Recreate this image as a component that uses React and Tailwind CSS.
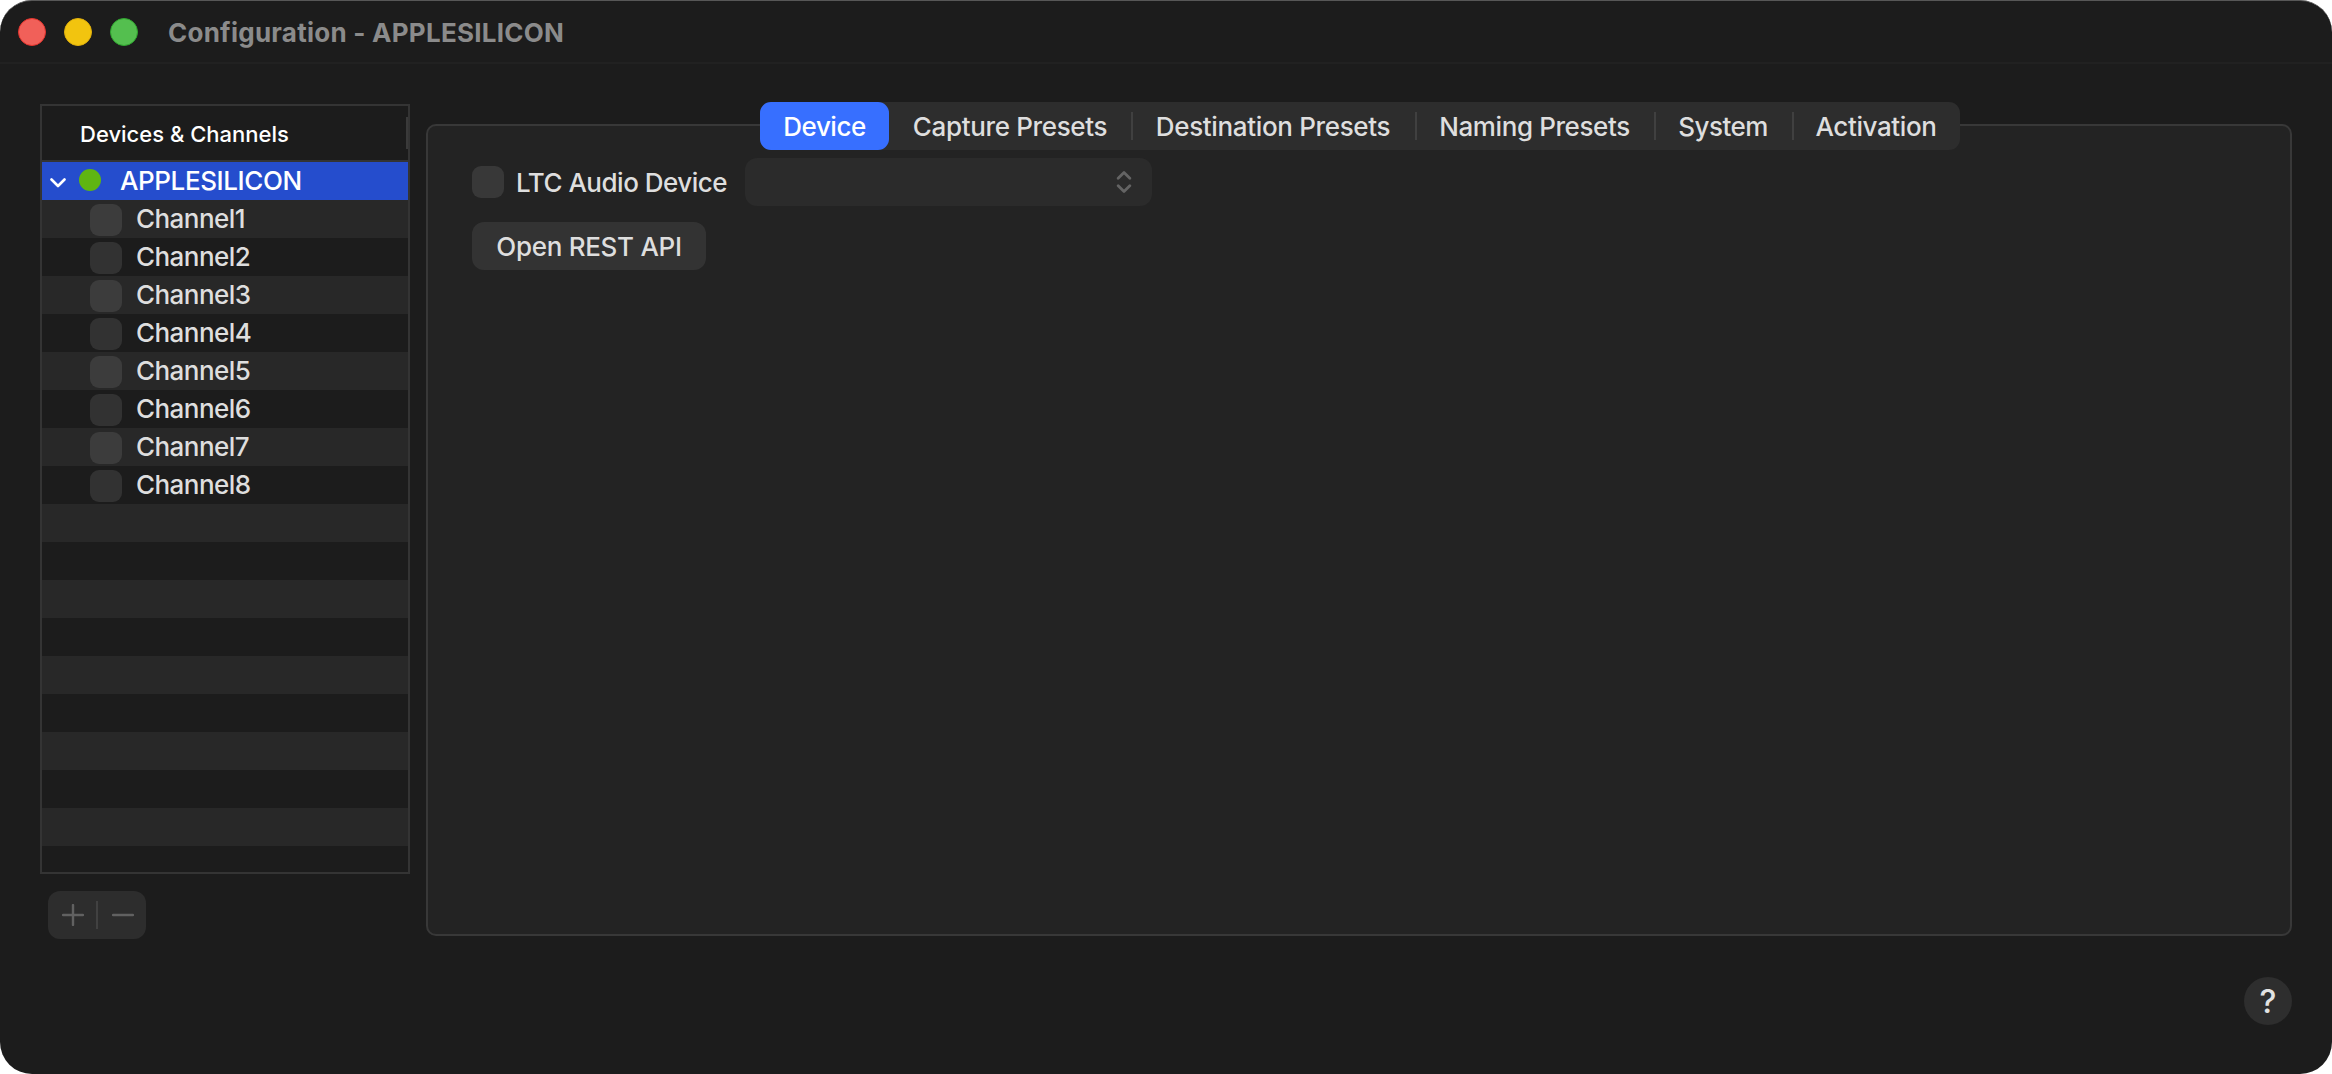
import clsx from 'clsx'

const channels = ['Channel1', 'Channel2', 'Channel3', 'Channel4', 'Channel5', 'Channel6', 'Channel7', 'Channel8']
const emptyRows = Array.from({ length: 10 })

const tabs = [
    { name: 'Device', width: 'w-[129px]', spacing: 'tracking-[-0.5px]', active: true },
    { name: 'Capture Presets', width: 'w-[242px]', spacing: 'tracking-[-0.35px]' },
    { name: 'Destination Presets', width: 'w-[284px]', spacing: 'tracking-[-0.35px]', divider: true },
    { name: 'Naming Presets', width: 'w-[239px]', spacing: 'tracking-[-0.4px]', divider: true },
    { name: 'System', width: 'w-[138px]', spacing: 'tracking-[-0.5px]', divider: true },
    { name: 'Activation', width: 'w-[168px]', spacing: 'tracking-[-0.4px]', divider: true },
]

const TitleBar = () => {
    return (
        <div className="flex h-[63px] items-center border-b-2 border-[#212121] pl-[18px]">
            <div className="flex gap-[18px]">
                <div className="size-7 rounded-full border border-[#e5342e] bg-[#f16059]" />
                <div className="size-7 rounded-full border border-[#e0b00d] bg-[#f2c40f]" />
                <div className="size-7 rounded-full border border-[#2fa52f] bg-[#54bf4f]" />
            </div>
            <div className="ml-[30px] pt-[2px] text-[26px] font-bold leading-[30px] text-[#8b8b8b] tracking-[0.25px]">
                Configuration - APPLESILICON
            </div>
        </div>
    )
}

const Sidebar = () => {
    return (
        <div className="w-[370px]">
            <div className="h-[770px] overflow-hidden border-2 border-[#343434]">
                <div className="flex h-[56px] items-center justify-between border-b-2 border-[#343434] pl-[38px]">
                    <span className="pt-[3px] text-[22px] font-medium text-white">Devices & Channels</span>
                    <span className="h-8 w-[2px] bg-[#3a3a3a]" />
                </div>

                <div className="flex h-[38px] items-center bg-[#254dcd] pl-2">
                    <svg className="mt-[3px] h-[10px] w-4" viewBox="0 0 16 10" fill="none">
                        <path d="M1.5 1.5L8 8L14.5 1.5" stroke="white" strokeWidth="2.6" strokeLinecap="round" strokeLinejoin="round" />
                    </svg>
                    <div className="ml-[13px] mb-[2px] size-[22px] rounded-full bg-[#5fb512]" />
                    <span className="ml-[19px] text-[26px] font-medium leading-[36px] tracking-[-0.4px] text-white">APPLESILICON</span>
                </div>

                {channels.map((name, i) => (
                    <div
                        key={name}
                        className={clsx('flex h-[38px] items-center pl-12', i % 2 === 0 ? 'bg-[#282828]' : 'bg-[#1c1c1c]')}
                    >
                        <div className={clsx('mt-[2px] size-8 rounded-[9px]', i % 2 === 0 ? 'bg-[#3c3c3c]' : 'bg-[#323232]')} />
                        <span className="ml-[14px] text-[26px] font-medium leading-[36px] tracking-[-0.55px] text-[#dedede]">{name}</span>
                    </div>
                ))}

                {emptyRows.map((_, i) => (
                    <div key={i} className={clsx('h-[38px]', i % 2 === 0 ? 'bg-[#282828]' : 'bg-[#1c1c1c]')} />
                ))}
            </div>

            <div className="ml-2 mt-[17px] flex h-12 w-[98px] items-center rounded-[12px] bg-[#2d2d2d]">
                <div className="flex w-12 justify-center">
                    <svg className="ml-px size-[22px]" viewBox="0 0 22 22" fill="none">
                        <path d="M11 1V21M1 11H21" stroke="#616161" strokeWidth="2.4" strokeLinecap="round" />
                    </svg>
                </div>
                <div className="h-7 w-[2px] bg-[#414141]" />
                <div className="flex w-12 justify-center">
                    <svg className="ml-px size-[22px]" viewBox="0 0 22 22" fill="none">
                        <path d="M1 11H21" stroke="#616161" strokeWidth="2.4" strokeLinecap="round" />
                    </svg>
                </div>
            </div>
        </div>
    )
}

const TabBar = () => {
    return (
        <div className="flex h-12 w-[1200px] rounded-[11px] bg-[#2d2d2d]">
            {tabs.map((tab) => (
                <div
                    key={tab.name}
                    className={clsx(
                        'relative flex h-12 items-center justify-center whitespace-nowrap text-[26px] font-medium',
                        tab.width,
                        tab.spacing,
                        tab.active ? 'rounded-[11px] bg-[#376fff] text-white' : 'text-[#dedede]'
                    )}
                >
                    {tab.divider && <span className="absolute left-0 top-[10px] h-7 w-[2px] bg-[#404040]" />}
                    {tab.name}
                </div>
            ))}
        </div>
    )
}

const DevicePanel = () => {
    return (
        <div className="mt-[20px] h-[812px] w-[1866px] rounded-[10px] border-2 border-[#383838] bg-[#232323]">
            {/* the tab bar sits across the top border */}
            <div className="-mt-6 pl-[332px]">
                <TabBar />
            </div>
            <div className="pl-11 pt-2">
                <div className="flex items-center">
                    <div className="size-8 rounded-[9px] bg-[#383838]" />
                    <span className="ml-3 w-[229px] whitespace-nowrap text-[26px] font-medium tracking-[-0.5px] text-[#dedede]">
                        LTC Audio Device
                    </span>
                    <div className="flex h-12 w-[407px] items-center justify-end rounded-[12px] bg-[#2b2b2b] pr-5">
                        <svg className="h-[22px] w-4" viewBox="0 0 16 22" fill="none">
                            <path d="M2.2 7.2L8 1.5L13.8 7.2M2.2 14.8L8 20.5L13.8 14.8" stroke="#646464" strokeWidth="2.8" strokeLinecap="round" strokeLinejoin="round" />
                        </svg>
                    </div>
                </div>
                <button className="mt-4 flex h-12 w-[234px] items-center justify-center whitespace-nowrap rounded-[12px] bg-[#333333] text-[26px] font-medium tracking-[-0.3px] text-[#dedede]">
                    Open REST API
                </button>
            </div>
        </div>
    )
}

const App = () => {
    return (
        <div className="h-[1074px] w-[2332px] bg-white font-['Inter',sans-serif]">
            <div className="flex h-[1074px] flex-col overflow-hidden rounded-[32px] border-t border-[#575757] bg-[#1c1c1c]">
                <TitleBar />
                <div className="flex gap-4 pl-10 pt-[40px]">
                    <Sidebar />
                    <DevicePanel />
                </div>
                <div className="mt-[38px] flex justify-end pr-10">
                    <button className="flex size-12 items-center justify-center rounded-full bg-[#2e2e2e] pt-px text-[32px] font-medium text-[#e2e2e2]">
                        ?
                    </button>
                </div>
            </div>
        </div>
    )
}

export default App
